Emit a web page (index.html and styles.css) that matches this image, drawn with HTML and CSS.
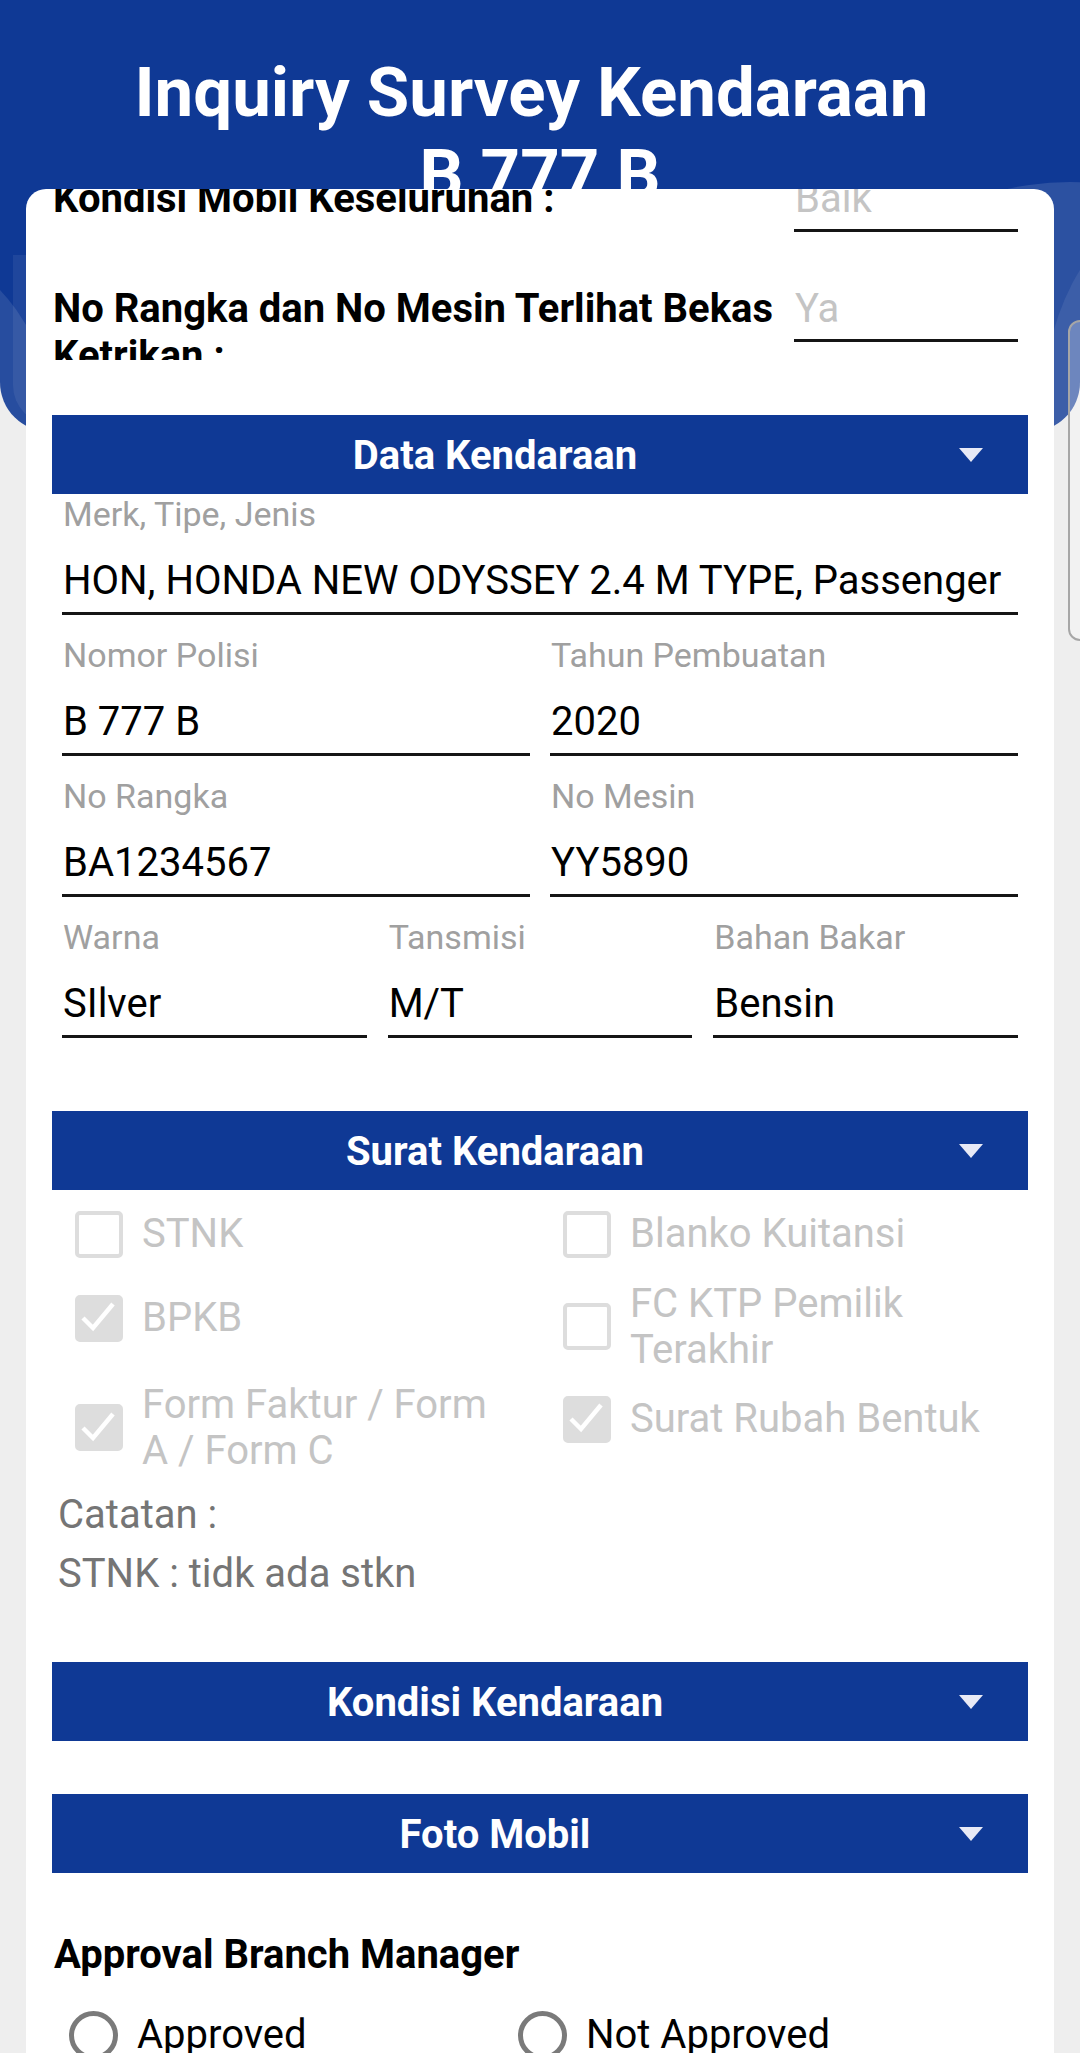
FILE: index.html
```html
<!DOCTYPE html>
<html lang="id">
<head>
<meta charset="utf-8">
<title>Inquiry Survey Kendaraan</title>
<link rel="stylesheet" href="styles.css">
</head>
<body>
<div class="screen">
  <div class="hero-bg">
    <div class="blob blob-l1"></div>
    <div class="blob blob-l2"></div>
    <div class="blob blob-r1"></div>
    <div class="blob blob-r2"></div>
  </div>
  <div class="peek"></div>

  <h1 class="title">Inquiry Survey Kendaraan&nbsp;<br>B 777 B</h1>

  <main class="card">
    <div class="scroll">
      <div class="q-row">
        <div class="q-label">Kondisi Mobil Keseluruhan :</div>
        <div class="q-value">Baik</div>
      </div>
      <div class="q-row">
        <div class="q-label">No Rangka dan No Mesin Terlihat Bekas Ketrikan :</div>
        <div class="q-value">Ya</div>
      </div>

      <section class="sec sec-data">
        <div class="sec-head"><span class="sec-title">Data Kendaraan</span><span class="sec-arrow"><svg width="24" height="14" viewBox="0 0 24 14"><polygon points="0,0 24,0 12,14" fill="#e8eaf6"/></svg></span></div>
        <div class="fields">
          <div class="f-row f-1">
            <div class="field"><div class="f-label">Merk, Tipe, Jenis</div><div class="f-value">HON, HONDA NEW ODYSSEY 2.4 M TYPE, Passenger</div></div>
          </div>
          <div class="f-row f-2">
            <div class="field"><div class="f-label">Nomor Polisi</div><div class="f-value">B 777 B</div></div>
            <div class="field"><div class="f-label">Tahun Pembuatan</div><div class="f-value">2020</div></div>
          </div>
          <div class="f-row f-2">
            <div class="field"><div class="f-label">No Rangka</div><div class="f-value">BA1234567</div></div>
            <div class="field"><div class="f-label">No Mesin</div><div class="f-value">YY5890</div></div>
          </div>
          <div class="f-row f-3">
            <div class="field"><div class="f-label">Warna</div><div class="f-value">SIlver</div></div>
            <div class="field"><div class="f-label">Tansmisi</div><div class="f-value">M/T</div></div>
            <div class="field"><div class="f-label">Bahan Bakar</div><div class="f-value">Bensin</div></div>
          </div>
        </div>
      </section>

      <section class="sec sec-surat">
        <div class="sec-head"><span class="sec-title">Surat Kendaraan</span><span class="sec-arrow"><svg width="24" height="14" viewBox="0 0 24 14"><polygon points="0,0 24,0 12,14" fill="#e8eaf6"/></svg></span></div>
        <div class="checks">
          <label class="cb"><span class="box"></span><span class="cb-text">STNK</span></label>
          <label class="cb"><span class="box"></span><span class="cb-text">Blanko Kuitansi</span></label>
          <label class="cb"><span class="box on"><svg width="48" height="48" viewBox="0 0 48 48"><polyline points="8,24 18,34 38,10" fill="none" stroke="#fff" stroke-width="4.5"/></svg></span><span class="cb-text">BPKB</span></label>
          <label class="cb"><span class="box"></span><span class="cb-text">FC KTP Pemilik Terakhir</span></label>
          <label class="cb"><span class="box on"><svg width="48" height="48" viewBox="0 0 48 48"><polyline points="8,24 18,34 38,10" fill="none" stroke="#fff" stroke-width="4.5"/></svg></span><span class="cb-text">Form Faktur / Form A / Form C</span></label>
          <label class="cb"><span class="box on"><svg width="48" height="48" viewBox="0 0 48 48"><polyline points="8,24 18,34 38,10" fill="none" stroke="#fff" stroke-width="4.5"/></svg></span><span class="cb-text">Surat Rubah Bentuk</span></label>
        </div>
        <p class="note">Catatan :</p>
        <p class="note note-2">STNK : tidk ada stkn</p>
      </section>

      <section class="sec sec-kondisi">
        <div class="sec-head"><span class="sec-title">Kondisi Kendaraan</span><span class="sec-arrow"><svg width="24" height="14" viewBox="0 0 24 14"><polygon points="0,0 24,0 12,14" fill="#e8eaf6"/></svg></span></div>
      </section>

      <section class="sec sec-foto">
        <div class="sec-head"><span class="sec-title">Foto Mobil</span><span class="sec-arrow"><svg width="24" height="14" viewBox="0 0 24 14"><polygon points="0,0 24,0 12,14" fill="#e8eaf6"/></svg></span></div>
      </section>

      <h2 class="approval">Approval Branch Manager</h2>
      <div class="radios">
        <label class="radio"><span class="ring"></span><span>Approved</span></label>
        <label class="radio"><span class="ring"></span><span>Not Approved</span></label>
      </div>
    </div>
  </main>
</div>
</body>
</html>
```

FILE: styles.css
```css
* { box-sizing: border-box; }
html, body {
  margin: 0;
  padding: 0;
  width: 1080px;
  height: 2053px;
  overflow: hidden;
  background: #eeeeee;
  font-family: Roboto, "Noto Sans", "Liberation Sans", sans-serif;
}
.screen {
  position: relative;
  width: 1080px;
  height: 2053px;
  overflow: hidden;
}
.hero-bg {
  position: absolute;
  top: 0;
  left: 0;
  width: 1080px;
  height: 432px;
  background: #0f3995;
  border-radius: 0 0 50px 50px;
  overflow: hidden;
}
.blob {
  position: absolute;
  background: rgba(255, 255, 255, 0.1);
}
.blob-l1 {
  left: -240px;
  top: 248px;
  width: 300px;
  height: 420px;
  border-radius: 50%;
}
.blob-l2 {
  left: 13px;
  top: 255px;
  width: 200px;
  height: 170px;
  border-radius: 0 0 0 40px;
  background: rgba(255, 255, 255, 0.07);
}
.blob-r1 {
  left: 860px;
  top: 182px;
  width: 420px;
  height: 300px;
  border-radius: 50%;
  background: rgba(255, 255, 255, 0.12);
}
.blob-r2 {
  left: 1040px;
  top: 222px;
  width: 220px;
  height: 420px;
  border-radius: 50%;
  background: rgba(255, 255, 255, 0.08);
}
.peek {
  position: absolute;
  left: 1068px;
  top: 320px;
  width: 40px;
  height: 321px;
  border: 2px solid #a6a6a6;
  border-radius: 12px;
  background: rgba(255, 255, 255, 0.25);
}
.title {
  position: relative;
  margin: 0;
  height: 189px;
  padding-top: 52px;
  text-align: center;
  color: #ffffff;
  font-weight: 700;
  font-size: 69px;
  line-height: 82px;
}
.card {
  position: relative;
  z-index: 2;
  margin: 0 26px;
  height: 1864px;
  background: #ffffff;
  border-radius: 20px 20px 0 0;
  overflow: hidden;
  padding: 0 26px;
}
.scroll {
  margin-top: -14px;
}
.q-row {
  display: flex;
  gap: 10px;
  height: 75px;
  padding-left: 1px;
  padding-right: 10px;
}
.q-row + .q-row { margin-top: 35px; }
.q-label {
  flex: 1;
  height: 75px;
  overflow: hidden;
  font-weight: 700;
  font-size: 40px;
  line-height: 47px;
  color: #000;
}
.q-value {
  width: 224px;
  align-self: flex-start;
  margin-top: 0.5px;
  font-size: 40px;
  line-height: 46px;
  color: #c4c4c4;
  padding-left: 1px;
  padding-bottom: 7.5px;
  border-bottom: 3px solid #151515;
}
.sec-head {
  display: flex;
  align-items: center;
  height: 79px;
  padding-top: 3px;
  background: #0f3995;
  color: #fff;
}
.sec-title {
  flex: 1;
  text-align: center;
  font-weight: 700;
  font-size: 40px;
  line-height: 46px;
}
.sec-arrow {
  width: 90px;
  padding-left: 21px;
  display: flex;
  align-items: center;
}
.sec-arrow svg { display: block; margin-top: -3px; }
.sec-data { margin-top: 55px; }
.fields { padding: 0 10px; }
.f-row {
  display: grid;
  column-gap: 20px;
}
.f-row + .f-row { margin-top: 20px; }
.f-1 { grid-template-columns: 1fr; }
.f-2 { grid-template-columns: 1fr 1fr; }
.f-3 { grid-template-columns: 1fr 1fr 1fr; column-gap: 21px; }
.f-label {
  font-size: 34px;
  line-height: 40px;
  color: #a0a0a0;
  padding-left: 1px;
  white-space: nowrap;
}
.f-value {
  margin-top: 23.5px;
  font-size: 40px;
  line-height: 46px;
  color: #000;
  padding-left: 1px;
  padding-bottom: 8.5px;
  border-bottom: 3px solid #151515;
  white-space: nowrap;
}
.sec-surat { margin-top: 73px; }
.checks {
  display: grid;
  grid-template-columns: 1fr 1fr;
  row-gap: 9px;
  align-items: start;
  margin-top: 6.5px;
}
.cb {
  display: flex;
  align-items: center;
  gap: 19px;
  min-height: 75px;
  padding: 0 35px 0 23px;
}
.box {
  flex: 0 0 48px;
  width: 48px;
  height: 47px;
  border: 4.5px solid #dddddd;
  border-radius: 5px;
  position: relative;
}
.box.on {
  background: #dddddd;
}
.box svg {
  position: absolute;
  left: -4.5px;
  top: -4.5px;
}
.cb-text {
  font-size: 40px;
  line-height: 46px;
  color: #c4c4c4;
}
.note {
  margin: 18px 0 0;
  padding-left: 6px;
  font-size: 40px;
  line-height: 46px;
  color: #757575;
}
.note-2 { margin-top: 13px; }
.sec-kondisi { margin-top: 65.5px; }
.sec-foto { margin-top: 53px; }
.approval {
  margin: 58.5px 0 0;
  padding-left: 2px;
  font-weight: 700;
  font-size: 40px;
  line-height: 46px;
  color: #000;
}
.radios {
  display: grid;
  grid-template-columns: 449px 1fr;
  margin-top: 27.5px;
  padding-left: 17px;
}
.radio {
  display: flex;
  align-items: center;
  gap: 19px;
  height: 60px;
  font-size: 40px;
  line-height: 46px;
  color: #000;
}
.ring {
  flex: 0 0 49px;
  width: 49px;
  height: 49px;
  border: 5px solid #7a7a7a;
  border-radius: 50%;
}
```
